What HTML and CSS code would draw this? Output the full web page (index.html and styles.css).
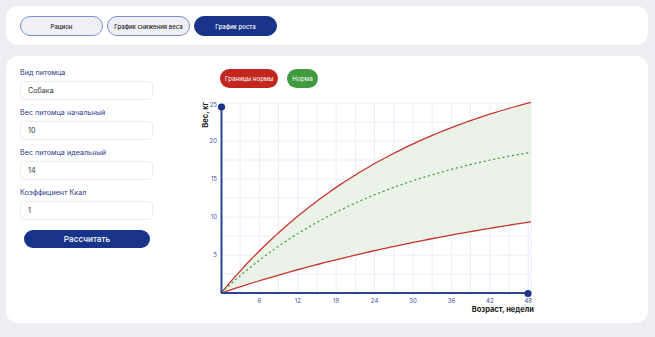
FILE: index.html
```html
<!DOCTYPE html>
<html lang="ru">
  <head>
    <meta charset="UTF-8" />
    <meta name="viewport" content="width=device-width, initial-scale=1.0" />
    <title>График роста</title>
    <link rel="stylesheet" href="styles.css">
  </head>

  <body>
    <div class="tabs">
      <button class="tab">Рацион</button>
      <button class="tab">График снижения веса</button>
      <button class="tab active">График роста</button>
    </div>

    <div class="main">
      <form class="form">
        <label class="label">Вид питомца</label>
        <div class="input">Собака</div>
        <label class="label">Вес питомца начальный</label>
        <div class="input">10</div>
        <label class="label">Вес питомца идеальный</label>
        <div class="input">14</div>
        <label class="label">Коэффициент Ккал</label>
        <div class="input">1</div>
        <button type="button" class="calc">Рассчитать</button>
      </form>

      <div class="chart">
        <div class="legend">
          <span class="pill red">Границы нормы</span>
          <span class="pill green">Норма</span>
        </div>
        <svg class="plot" width="345" height="220" viewBox="0 0 345 220">
          <g id="grid" stroke="#ececfa" stroke-width="1"></g>
          <path id="band" fill="#ebf3e8"></path>
          <path id="low" fill="none" stroke="#c8342c" stroke-width="1.3"></path>
          <path id="up" fill="none" stroke="#c8342c" stroke-width="1.3"></path>
          <path id="mid" fill="none" stroke="#529f50" stroke-width="1.3" stroke-dasharray="2.2 2.6"></path>
          <line x1="26.5" y1="9" x2="26.5" y2="195" stroke="#2b4595" stroke-width="2"></line>
          <line x1="26" y1="195" x2="333" y2="195" stroke="#2b4595" stroke-width="2"></line>
          <circle cx="26.5" cy="9" r="3.6" fill="#17348a"></circle>
          <circle cx="333" cy="195.5" r="3.6" fill="#17348a"></circle>
          <g id="ticks" class="tick"></g>
          <text class="title" transform="translate(13 4) rotate(-90)" text-anchor="end">Вес, кг</text>
          <text class="title" x="339" y="214" text-anchor="end">Возраст, недели</text>
        </svg>
      </div>
    </div>

    <script>
      const X = (t) => 26 + t * 6.4;
      const Y = (w) => 195 - w * 7.6;
      const up = (t) => 32 * (1 - Math.exp(-t / 31.6));
      const mid = (t) => 22.6 * (1 - Math.exp(-t / 28.3));
      const low = (t) => 16.9 * (1 - Math.exp(-t / 60));
      const tEnd = (336 - 26) / 6.4;

      function line(f) {
        let pts = [];
        for (let i = 0; i <= 60; i++) {
          let t = (tEnd * i) / 60;
          pts.push(X(t).toFixed(1) + "," + Y(f(t)).toFixed(1));
        }
        return pts;
      }

      let u = line(up);
      let l = line(low);
      document.getElementById("up").setAttribute("d", "M" + u.join(" L"));
      document.getElementById("low").setAttribute("d", "M" + l.join(" L"));
      document.getElementById("mid").setAttribute("d", "M" + line(mid).join(" L"));
      document
        .getElementById("band")
        .setAttribute("d", "M" + u.join(" L") + " L" + l.reverse().join(" L") + " Z");

      let grid = document.getElementById("grid");
      let gl = "";
      for (let k = 0; k <= 16; k++) {
        let x = 26 + k * 19.2;
        gl += `<line x1="${x}" y1="5" x2="${x}" y2="195"></line>`;
      }
      gl += `<line x1="336" y1="5" x2="336" y2="195"></line>`;
      for (let k = 0; k <= 10; k++) {
        let y = 195 - k * 19;
        gl += `<line x1="26" y1="${y}" x2="336" y2="${y}"></line>`;
      }
      grid.innerHTML = gl;

      let ticks = document.getElementById("ticks");
      let tl = "";
      for (let w = 5; w <= 25; w += 5) {
        let y = w == 25 ? 9 : Y(w) + 2;
        tl += `<text x="22" y="${y}" text-anchor="end">${w}</text>`;
      }
      for (let t = 6; t <= 48; t += 6) {
        tl += `<text x="${X(t)}" y="205" text-anchor="middle">${t}</text>`;
      }
      ticks.innerHTML = tl;
    </script>
  </body>
</html>
```

FILE: styles.css
```css
body {
  margin: 0;
  background: #eceef2;
  font-family: Inter, "Noto Sans", sans-serif;
}

.tabs {
  display: flex;
  gap: 4px;
  margin: 6px 7px 0 6px;
  height: 39px;
  padding: 10px 14px 0;
  box-sizing: border-box;
  background: #fff;
  border-radius: 12px;
}

.tab {
  width: 83px;
  height: 20px;
  padding: 0;
  border: 1px solid #7d8ecf;
  border-radius: 10px;
  background: #eef0f6;
  color: #222;
  font-family: inherit;
  font-size: 6px;
  font-weight: 500;
}

.tab.active {
  background: #17348a;
  border-color: #17348a;
  color: #fff;
}

.main {
  display: flex;
  margin: 11px 7px 0 6px;
  height: 267px;
  padding: 12px 14px;
  box-sizing: border-box;
  background: #fff;
  border-radius: 12px;
}

.form {
  display: flex;
  flex-direction: column;
  width: 133px;
}

.label {
  height: 10px;
  line-height: 10px;
  font-size: 7.2px;
  color: #2b3f8c;
}

.input {
  height: 19px;
  margin: 3px 0 8px;
  padding-left: 7px;
  box-sizing: border-box;
  border: 1px solid #ededf1;
  border-radius: 5px;
  line-height: 17px;
  font-size: 7.2px;
  color: #3a3a3a;
}

.calc {
  width: 126px;
  height: 18px;
  margin: 2px 0 0 4px;
  border: none;
  border-radius: 9px;
  background: #17348a;
  color: #fff;
  font-family: inherit;
  font-size: 8.2px;
  font-weight: 500;
}

.chart {
  margin-left: 42px;
}

.legend {
  display: flex;
  gap: 9px;
  margin: 1px 0 0 25px;
}

.pill {
  height: 19px;
  padding: 0 5px;
  border-radius: 10px;
  line-height: 19px;
  font-size: 6.2px;
  color: #fff;
}

.pill.red {
  background: #c1271f;
}

.pill.green {
  background: #3f9a40;
}

.plot {
  display: block;
  margin-top: 10px;
}

.tick text {
  font-size: 6px;
  fill: #3a4f9f;
}

.title {
  font-size: 7.5px;
  font-weight: 700;
  fill: #222;
}
```
